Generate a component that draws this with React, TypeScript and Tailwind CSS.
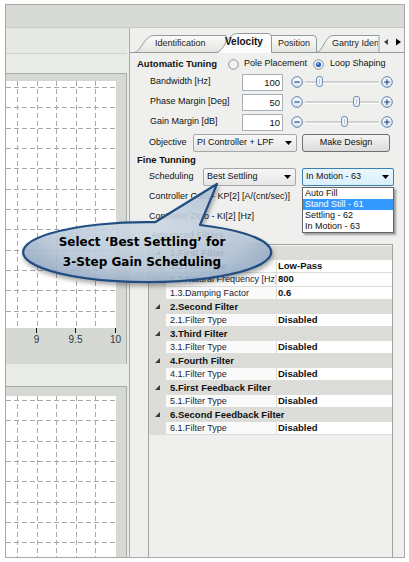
import React from "react";

const VX = [11, 30.5, 50, 69.5, 89];

function PlotGrid({ w, h, y0 }: { w: number; h: number; y0: number }) {
  const ys: number[] = [];
  for (let y = y0; y < h; y += 20.35) ys.push(Math.round(y) + 0.5);
  return (
    <svg width={w} height={h} className="block">
      {VX.map((x) => (
        <line key={"v" + x} x1={Math.round(x) + 0.5} y1={0} x2={Math.round(x) + 0.5} y2={h} stroke="#a9a9a9" strokeDasharray="5 3" />
      ))}
      {ys.map((y) => (
        <line key={"h" + y} x1={0} y1={y} x2={w} y2={y} stroke="#a9a9a9" strokeDasharray="5 3" />
      ))}
    </svg>
  );
}

function CircleBtn({ plus }: { plus?: boolean }) {
  return (
    <svg width="12" height="12" viewBox="0 0 12 12" className="shrink-0">
      <defs>
        <linearGradient id={plus ? "gp" : "gm"} x1="0" y1="0" x2="0" y2="1">
          <stop offset="0" stopColor="#ffffff" />
          <stop offset="1" stopColor="#d9e3f0" />
        </linearGradient>
      </defs>
      <circle cx="6" cy="6" r="5.3" fill={`url(#${plus ? "gp" : "gm"})`} stroke="#5a7bb0" strokeWidth="1" />
      <line x1="3.3" y1="6" x2="8.7" y2="6" stroke="#3d5c94" strokeWidth="1.3" />
      {plus && <line x1="6" y1="3.3" x2="6" y2="8.7" stroke="#3d5c94" strokeWidth="1.3" />}
    </svg>
  );
}

function Slider({ pos }: { pos: number }) {
  return (
    <div className="relative w-[78px] h-[12px] flex items-center px-[2px]">
      <div className="flex-1 h-[3px] bg-[#d2d2d0] border-b border-white" />
      <svg width="7" height="11" viewBox="0 0 7 11" className="absolute top-[0px]" style={{ left: pos }}>
        <rect x="0.5" y="0.5" width="6" height="10" rx="2.5" fill="#eef3fa" stroke="#6f8db8" />
        <line x1="3.5" y1="3" x2="3.5" y2="8" stroke="#b7c8de" />
      </svg>
    </div>
  );
}

function Radio({ on }: { on?: boolean }) {
  return (
    <svg width="11" height="11" viewBox="0 0 11 11" className="shrink-0">
      <circle cx="5.5" cy="5.5" r="4.8" fill="#f1f1f1" stroke="#8d8f8f" />
      {on && <circle cx="5.5" cy="5.5" r="2.6" fill="#2c66c2" />}
      {on && <circle cx="4.8" cy="4.7" r="1" fill="#9fc2f0" />}
    </svg>
  );
}

function Arrow() {
  return (
    <svg width="7" height="4" viewBox="0 0 7 4" className="shrink-0">
      <polygon points="0,0 7,0 3.5,4" fill="#000" />
    </svg>
  );
}

function TuneRow({ label, value, pos }: { label: string; value: string; pos: number }) {
  return (
    <div className="flex items-center h-[20px] pl-[20px]">
      <span className="w-[92px] shrink-0">{label}</span>
      <div className="w-[41px] h-[17px] bg-white border border-[#a9afb8] text-right pr-[2px] leading-[15px] text-[9.5px] shrink-0">
        {value}
      </div>
      <div className="ml-[8px] flex items-center">
        <CircleBtn />
        <Slider pos={pos} />
        <CircleBtn plus />
      </div>
    </div>
  );
}

type Row = { cat?: string; label?: string; value?: string };
const rows: Row[] = [
  { cat: "1.First Filter" },
  { label: "1.1.Filter Type", value: "Low-Pass" },
  { label: "1.2.Natural Frequency [Hz]", value: "800" },
  { label: "1.3.Damping Factor", value: "0.6" },
  { cat: "2.Second Filter" },
  { label: "2.1.Filter Type", value: "Disabled" },
  { cat: "3.Third Filter" },
  { label: "3.1.Filter Type", value: "Disabled" },
  { cat: "4.Fourth Filter" },
  { label: "4.1.Filter Type", value: "Disabled" },
  { cat: "5.First Feedback Filter" },
  { label: "5.1.Filter Type", value: "Disabled" },
  { cat: "6.Second Feedback Filter" },
  { label: "6.1.Filter Type", value: "Disabled" },
];

function TabStrip() {
  return (
    <div className="relative h-[25px] shrink-0">
      <svg width="274" height="25" className="absolute inset-0">
        <defs>
          <linearGradient id="tabg" x1="0" y1="0" x2="0" y2="1">
            <stop offset="0" stopColor="#fbfbfa" />
            <stop offset="1" stopColor="#e4e5e0" />
          </linearGradient>
        </defs>
        <path d="M4,24.5 C11,24.5 14,7.5 24,7.5 L96,7.5 L96,24.5" fill="url(#tabg)" stroke="#919b9c" />
        <path d="M186,24.5 C193,24.5 195,7.5 203,7.5 L249,7.5 L249,24.5" fill="url(#tabg)" stroke="#919b9c" />
        <path d="M140,24.5 L140,7.5 L183,7.5 Q186.5,7.5 186.5,11 L186.5,24.5" fill="url(#tabg)" stroke="#919b9c" />
        <line x1="0" y1="24.5" x2="274" y2="24.5" stroke="#919b9c" />
        <path d="M86,25 C94,25 97,5.5 107,5.5 L138,5.5 Q141.5,5.5 141.5,9 L141.5,25 Z" fill="#fcfcfc" />
        <path d="M86,24.5 C94,24.5 97,5.5 107,5.5 L138,5.5 Q141.5,5.5 141.5,9 L141.5,24.5" fill="none" stroke="#919b9c" />
        <rect x="250" y="0" width="24" height="24" fill="#eff0ed" />
        <polygon points="258,11 254,14 258,17" fill="#444" />
        <polygon points="266,10.5 271,14 266,17.5" fill="#000" />
      </svg>
      <span className="absolute left-[25px] top-[9px] text-[9px] leading-[12px] text-[#222]">Identification</span>
      <span className="absolute left-[95px] top-[8px] text-[10px] leading-[12px] font-bold">Velocity</span>
      <span className="absolute left-[148px] top-[9px] text-[9px] leading-[12px] text-[#222]">Position</span>
      <span className="absolute left-[202px] top-[9px] w-[46px] overflow-hidden whitespace-nowrap text-[9px] leading-[12px] text-[#222]">
        Gantry Identification
      </span>
    </div>
  );
}

export default function App() {
  return (
    <div className="relative w-[409px] h-[562px] bg-white pt-[4px] pb-[4px] pl-[5px] pr-[4px] font-['Liberation_Sans',Arial,sans-serif] text-[9px] text-[#111] overflow-hidden">
      <div className="h-full border border-[#a6aaa4] bg-[#e8ebe6] flex flex-col">
        {/* window bar */}
        <div className="h-[23px] shrink-0 bg-[#d8dbd5] border-b border-[#c6cac4]" />

        <div className="flex-1 flex min-h-0">
          {/* charts column */}
          <div className="w-[121px] shrink-0 flex flex-col">
            <div className="h-[26px] shrink-0 bg-[#e6e9e3] border-b border-[#cdd1cb]" />
            <div className="h-[19px] shrink-0" />
            <div className="h-[291px] shrink-0 border-t border-r border-[#a9ada7] bg-[#d6d9d3] pt-[7px] flex flex-col">
              <div className="w-[110px] h-[247px] bg-white">
                <PlotGrid w={110} h={247} y0={6} />
              </div>
              <div className="relative flex-1">
                {[
                  { x: 30, t: "9" },
                  { x: 69, t: "9.5" },
                  { x: 109, t: "10" },
                ].map((a) => (
                  <React.Fragment key={a.t}>
                    <div className="absolute top-0 w-px h-[5px] bg-[#111]" style={{ left: a.x }} />
                    <span
                      className="absolute top-[6px] w-[24px] -ml-[12px] text-center text-[10px] leading-[12px] text-[#2a3848]"
                      style={{ left: a.x + 0.5 }}
                    >
                      {a.t}
                    </span>
                  </React.Fragment>
                ))}
              </div>
            </div>
            <div className="h-[22px] shrink-0" />
            <div className="flex-1 border-t border-r border-[#a9ada7] bg-[#d6d9d3] pt-[9px] flex flex-col min-h-0">
              <div className="w-[110px] flex-1 bg-white overflow-hidden">
                <PlotGrid w={110} h={161} y0={4} />
              </div>
            </div>
          </div>

          {/* splitter */}
          <div className="w-[2px] shrink-0" />

          {/* tuning panel */}
          <div className="flex-1 border-l border-[#a9ada7] bg-[#eff0ed] flex flex-col min-w-0">
            <TabStrip />
            <div className="flex-1 flex flex-col pt-[3px] min-h-0">
              <div className="flex items-center h-[16px] pl-[7px]">
                <span className="w-[91px] shrink-0 font-bold text-[9.5px]">Automatic Tuning</span>
                <Radio />
                <span className="ml-[5px] w-[69px] shrink-0">Pole Placement</span>
                <Radio on />
                <span className="ml-[6px]">Loop Shaping</span>
              </div>
              <TuneRow label="Bandwidth [Hz]" value="100" pos={13} />
              <TuneRow label="Phase Margin [Deg]" value="50" pos={50} />
              <TuneRow label="Gain Margin [dB]" value="10" pos={38} />

              <div className="flex items-center h-[21px] pl-[19px]">
                <span className="w-[44px] shrink-0">Objective</span>
                <div className="w-[104px] h-[18px] shrink-0 border border-[#a6a6a6] rounded-[2px] bg-gradient-to-b from-[#f7f7f7] to-[#e6e6e6] flex items-center pl-[3px] pr-[4px]">
                  <span className="flex-1 whitespace-nowrap overflow-hidden">PI Controller + LPF</span>
                  <Arrow />
                </div>
                <div className="ml-[5px] w-[88px] h-[18px] shrink-0 border border-[#707070] rounded-[3px] bg-gradient-to-b from-[#f4f4f4] to-[#dcdcdc] flex items-center justify-center">
                  Make Design
                </div>
              </div>

              <div className="flex items-center h-[14px] pl-[7px]">
                <span className="font-bold text-[9.5px]">Fine Tunning</span>
              </div>

              <div className="flex items-center h-[20px] pl-[19px] relative z-10">
                <span className="w-[54px] shrink-0">Scheduling</span>
                <div className="w-[93px] h-[18px] shrink-0 border border-[#a6a6a6] rounded-[2px] bg-gradient-to-b from-[#f7f7f7] to-[#e6e6e6] flex items-center pl-[3px] pr-[4px]">
                  <span className="flex-1">Best Settling</span>
                  <Arrow />
                </div>
                <div className="relative ml-[6px] w-[92px] h-[18px] shrink-0">
                  <div className="h-full border border-[#3c7fb1] rounded-[2px] bg-gradient-to-b from-[#eaf6fd] to-[#d9f0fc] flex items-center pl-[3px] pr-[4px]">
                    <span className="flex-1">In Motion - 63</span>
                    <Arrow />
                  </div>
                  <div className="absolute left-0 top-[19px] w-[92px] bg-white border border-[#646464] shadow-[2px_2px_2px_rgba(0,0,0,0.35)] py-0">
                    {["Auto Fill", "Stand Still - 61", "Settling - 62", "In Motion - 63"].map((t, i) => (
                      <div
                        key={t}
                        className={
                          i === 1
                            ? "h-[11px] leading-[11px] pl-[2px] bg-[#3399ff] text-white"
                            : "h-[11px] leading-[11px] pl-[2px]"
                        }
                      >
                        {t}
                      </div>
                    ))}
                  </div>
                </div>
              </div>

              <div className="flex items-center h-[20px] pl-[19px]">Controller Gain - KP[2] [A/(cnt/sec)]</div>
              <div className="flex items-center h-[20px] pl-[19px]">Controller Zero - KI[2] [Hz]</div>
              <div className="flex items-center h-[17px] pl-[21px] font-bold text-[#3a3a3a]">Advanced Filters</div>

              <div className="ml-[18px] w-[245px] flex-1 border-t border-x border-[#a0a3a0] pt-px">
                {rows.map((r, i) =>
                  r.cat ? (
                    <div key={i} className="flex h-[13.5px] bg-[#dcddd9] items-center">
                      <div className="w-[17px] shrink-0 flex items-center justify-center">
                        <svg width="5" height="5" viewBox="0 0 5 5">
                          <polygon points="5,0 5,5 0,5" fill="#3c3c3c" />
                        </svg>
                      </div>
                      <span className="pl-[4px] font-bold text-[9.5px] whitespace-nowrap">{r.cat}</span>
                    </div>
                  ) : (
                    <div key={i} className="flex h-[13.5px]">
                      <div className="w-[17px] shrink-0 bg-[#dcddd9]" />
                      <div className="w-[110px] shrink-0 bg-[#fafafa] border-b border-[#dcddd9] pl-[4px] leading-[12.5px] whitespace-nowrap overflow-hidden text-[#1b2433]">
                        {r.label}
                      </div>
                      <div className="flex-1 bg-white border-b border-l border-[#dcddd9] pl-[1px] leading-[12.5px] font-bold text-[9.5px]">
                        {r.value}
                      </div>
                    </div>
                  )
                )}
              </div>
            </div>
          </div>
        </div>
      </div>

      {/* callout */}
      <svg width="409" height="562" className="absolute left-0 top-0 pointer-events-none z-20">
        <defs>
          <radialGradient id="bub" cx="0.5" cy="0.45" r="0.6">
            <stop offset="0" stopColor="#d3dee9" />
            <stop offset="0.7" stopColor="#b8c8da" />
            <stop offset="1" stopColor="#93aac4" />
          </radialGradient>
          <filter id="sh" x="-10%" y="-20%" width="120%" height="150%">
            <feDropShadow dx="1" dy="3" stdDeviation="2" floodColor="#000" floodOpacity="0.35" />
          </filter>
        </defs>
        <path
          d="M155,222.2 L217,184 L200,225 A124,30 0 1 1 155,222.2 Z"
          fill="url(#bub)"
          fillOpacity="0.86"
          stroke="#234d82"
          strokeWidth="2.2"
          strokeLinejoin="round"
          filter="url(#sh)"
        />
      </svg>
      <div className="absolute left-[22px] top-[232px] w-[240px] text-center leading-[20px] font-['DejaVu_Sans',Verdana,sans-serif] font-bold text-[12px] text-black z-30">
        <div>Select ‘Best Settling’ for</div>
        <div>3-Step Gain Scheduling</div>
      </div>
    </div>
  );
}
